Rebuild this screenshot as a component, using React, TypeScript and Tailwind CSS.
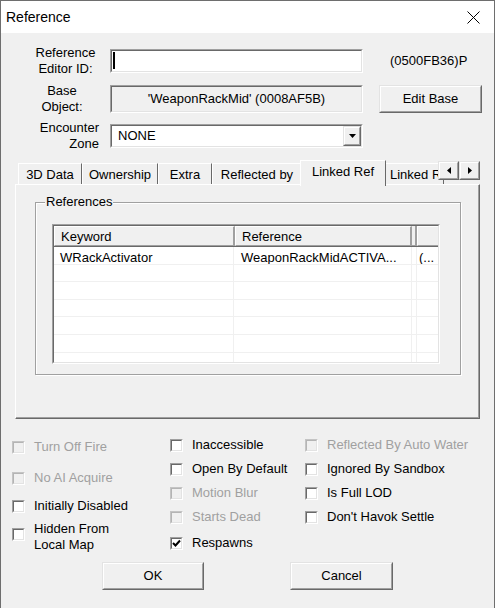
import { FC, ReactNode } from "react";

const Sunken: FC<{ className?: string; inner?: string; children?: ReactNode }> = ({
  className = "",
  inner = "",
  children,
}) => (
  <div className={`border border-t-[#a0a0a0] border-l-[#a0a0a0] border-r-white border-b-white ${className}`}>
    <div className={`h-full w-full border border-t-[#696969] border-l-[#696969] border-r-[#e3e3e3] border-b-[#e3e3e3] ${inner}`}>
      {children}
    </div>
  </div>
);

const Raised: FC<{ className?: string; inner?: string; children?: ReactNode }> = ({
  className = "",
  inner = "",
  children,
}) => (
  <div className={`border border-t-[#e3e3e3] border-l-[#e3e3e3] border-r-[#696969] border-b-[#696969] bg-[#f0f0f0] ${className}`}>
    <div className={`flex h-full w-full items-center justify-center border border-t-white border-l-white border-r-[#a0a0a0] border-b-[#a0a0a0] ${inner}`}>
      {children}
    </div>
  </div>
);

const Check: FC<{ label: ReactNode; checked?: boolean; disabled?: boolean; className?: string; two?: boolean }> = ({
  label,
  checked,
  disabled,
  className = "",
  two,
}) => (
  <div className={`flex ${two ? "h-[32px] items-start" : "h-[24px] items-center"} ${className}`}>
    <div
      className={`h-[13px] w-[13px] shrink-0 border ${two ? "mt-[7px]" : ""} ${
        disabled
          ? "border-t-[#c4c4c4] border-l-[#c4c4c4] border-r-white border-b-white"
          : "border-t-[#a0a0a0] border-l-[#a0a0a0] border-r-white border-b-white"
      }`}
    >
      <div
        className={`flex h-full w-full items-center justify-center border ${
          disabled
            ? "border-t-[#b4b4b4] border-l-[#b4b4b4] border-r-[#e3e3e3] border-b-[#e3e3e3] bg-[#f0f0f0]"
            : "border-t-[#696969] border-l-[#696969] border-r-[#e3e3e3] border-b-[#e3e3e3] bg-white"
        }`}
      >
        {checked ? (
          <svg width="9" height="9" viewBox="0 0 9 9">
            <path d="M1 4L3.5 6.5L8 1.5" fill="none" stroke="#000" strokeWidth="2" />
          </svg>
        ) : null}
      </div>
    </div>
    <span className={`ml-[9px] whitespace-nowrap ${disabled ? "text-[#a0a0a0]" : "text-black"}`}>{label}</span>
  </div>
);

const tabs = [
  { label: "3D Data", w: "w-[64px]" },
  { label: "Ownership", w: "w-[76px]" },
  { label: "Extra", w: "w-[54px]" },
  { label: "Reflected by", w: "w-[90px]" },
];

const tabBorder = "border-t border-l border-r border-t-white border-l-white border-r-[#696969]";

const Row: FC<{ a?: string; b?: string; c?: string }> = ({ a = "", b = "", c = "" }) => (
  <div className="flex h-[17.6px] shrink-0 items-center border-b border-[#f0f0f0] bg-white">
    <div className="h-full w-[180px] shrink-0 truncate border-r border-[#f0f0f0] pl-[6px] pt-[3px]">{a}</div>
    <div className="h-full w-[178px] shrink-0 overflow-hidden whitespace-nowrap border-r border-[#f0f0f0] pl-[7px] pt-[3px]">{b}</div>
    <div className="h-full w-[5px] shrink-0 border-r border-[#f0f0f0]" />
    <div className="h-full flex-1 overflow-hidden whitespace-nowrap pl-[2px] pt-[3px]">{c}</div>
  </div>
);

export default function App() {
  return (
    <div className="h-[608px] w-[495px] overflow-hidden border-x border-t border-[#6e6e6e] bg-[#f0f0f0] font-['Liberation_Sans',Arial,sans-serif] text-[13px] leading-[16px] text-black">
      {/* Title bar */}
      <div className="flex h-[32px] items-center justify-between bg-white pl-[5px] pr-[14px]">
        <span className="text-[14px]">Reference</span>
        <svg width="13" height="13" viewBox="0 0 13 13">
          <path d="M0.5 0.5L12.5 12.5M12.5 0.5L0.5 12.5" stroke="#000" strokeWidth="1" />
        </svg>
      </div>

      {/* Editor ID */}
      <div className="mt-[12px] flex h-[32px] items-center">
        <div className="w-[109px] pl-[20px] text-center">
          Reference
          <br />
          Editor ID:
        </div>
        <Sunken className="h-[24px] w-[253px]" inner="bg-white">
          <div className="ml-[1px] mt-[1px] h-[17px] w-[2px] bg-black" />
        </Sunken>
        <span className="ml-[27px]">(0500FB36)P</span>
      </div>

      {/* Base object */}
      <div className="mt-[5px] flex h-[34px] items-center">
        <div className="w-[109px] pl-[13px] text-center">
          Base
          <br />
          Object:
        </div>
        <Sunken className="h-[28px] w-[253px]" inner="flex items-center justify-center bg-[#f0f0f0]">
          'WeaponRackMid' (0008AF5B)
        </Sunken>
        <Raised className="ml-[16px] h-[28px] w-[103px]">Edit Base</Raised>
      </div>

      {/* Encounter zone */}
      <div className="mt-[3px] flex h-[34px] items-center">
        <div className="w-[109px] pr-[11px] text-right">
          Encounter
          <br />
          Zone
        </div>
        <Sunken className="h-[24px] w-[253px]" inner="flex items-center bg-white">
          <span className="flex-1 pl-[6px]">NONE</span>
          <Raised className="h-full w-[18px]">
            <svg width="7" height="4" viewBox="0 0 7 4">
              <path d="M0 0H7L3.5 4Z" fill="#000" />
            </svg>
          </Raised>
        </Sunken>
      </div>

      {/* Tab control */}
      <div className="mx-[14px] mt-[7px]">
        <div className="relative flex h-[24px] items-end pl-[3px]">
          {tabs.map((t) => (
            <div key={t.label} className={`${t.w} ${tabBorder} flex h-[21px] shrink-0 items-center justify-center whitespace-nowrap pt-[1px]`}>
              {t.label}
            </div>
          ))}
          <div className={`relative z-10 -mx-[2px] -mb-[2px] flex h-[26px] w-[86px] shrink-0 items-center justify-center bg-[#f0f0f0] pb-[3px] ${tabBorder}`}>
            Linked Ref
          </div>
          <div className={`flex h-[21px] w-[60px] shrink-0 items-center overflow-hidden whitespace-nowrap pl-[5px] pt-[1px] ${tabBorder}`}>
            Linked Ref
          </div>
          <div className="absolute right-0 top-[1px] flex">
            <Raised className="h-[19px] w-[21px]">
              <svg width="4" height="7" viewBox="0 0 4 7">
                <path d="M4 0V7L0 3.5Z" fill="#000" />
              </svg>
            </Raised>
            <Raised className="h-[19px] w-[21px]">
              <svg width="4" height="7" viewBox="0 0 4 7">
                <path d="M0 0V7L4 3.5Z" fill="#000" />
              </svg>
            </Raised>
          </div>
        </div>
        <div className="h-[235px] border border-t-white border-l-white border-r-[#696969] border-b-[#696969]">
          <div className="h-full w-full border-r border-b border-[#a0a0a0] pt-[17px]">
            {/* References group */}
            <div className="ml-[19px] h-[173px] w-[426px] border border-[#a0a0a0] shadow-[inset_1px_1px_0_#fff,1px_1px_0_#fff]">
              <div className="-mt-[9px] ml-[9px] w-fit bg-[#f0f0f0] px-[1px]">References</div>
              <div className="ml-[16px] mt-[14px] h-[140px] w-[388px] border border-t-[#a0a0a0] border-l-[#a0a0a0] border-r-white border-b-white">
                <div className="flex h-full w-full flex-col overflow-hidden border border-t-[#696969] border-l-[#696969] border-r-[#e3e3e3] border-b-[#e3e3e3] bg-white">
                  <div className="flex h-[21px] shrink-0 border-b border-[#696969] bg-[#f0f0f0]">
                    <div className="flex w-[181px] shrink-0 items-center border-t border-l border-r-2 border-b border-t-white border-l-white border-r-[#a0a0a0] border-b-[#a0a0a0] pl-[6px] pt-[1px]">
                      Keyword
                    </div>
                    <div className="flex w-[177px] shrink-0 items-center border-t border-l border-r-2 border-b border-t-white border-l-white border-r-[#a0a0a0] border-b-[#a0a0a0] pl-[6px] pt-[1px]">
                      Reference
                    </div>
                    <div className="w-[5px] shrink-0 border-r-2 border-b border-r-[#a0a0a0] border-b-[#a0a0a0]" />
                    <div className="flex-1 border-t border-l border-b border-t-white border-l-white border-b-[#a0a0a0]" />
                  </div>
                  <Row a="WRackActivator" b="WeaponRackMidACTIVA..." c="(..." />
                  <Row />
                  <Row />
                  <Row />
                  <Row />
                  <Row />
                  <Row />
                </div>
              </div>
            </div>
          </div>
        </div>
      </div>

      {/* Flags */}
      <div className="mt-[14px] flex h-[129px] pl-[11px]">
        <div className="flex w-[158px] flex-col">
          <Check className="mt-[2px]" label="Turn Off Fire" disabled />
          <Check className="mt-[7px]" label="No AI Acquire" disabled />
          <Check className="mt-[4px]" label="Initially Disabled" />
          <Check
            className="mt-[3px]"
            two
            label={
              <>
                Hidden From
                <br />
                Local Map
              </>
            }
          />
        </div>
        <div className="flex w-[135px] flex-col">
          <Check label="Inaccessible" />
          <Check label="Open By Default" />
          <Check label="Motion Blur" disabled />
          <Check label="Starts Dead" disabled />
          <Check className="mt-[2px]" label="Respawns" checked />
        </div>
        <div className="flex flex-1 flex-col">
          <Check label="Reflected By Auto Water" disabled />
          <Check label="Ignored By Sandbox" />
          <Check label="Is Full LOD" />
          <Check label="Don't Havok Settle" />
        </div>
      </div>

      {/* Buttons */}
      <div className="flex pl-[101px]">
        <Raised className="h-[28px] w-[102px]">OK</Raised>
        <Raised className="ml-[86px] h-[28px] w-[103px]">Cancel</Raised>
      </div>
    </div>
  );
}
